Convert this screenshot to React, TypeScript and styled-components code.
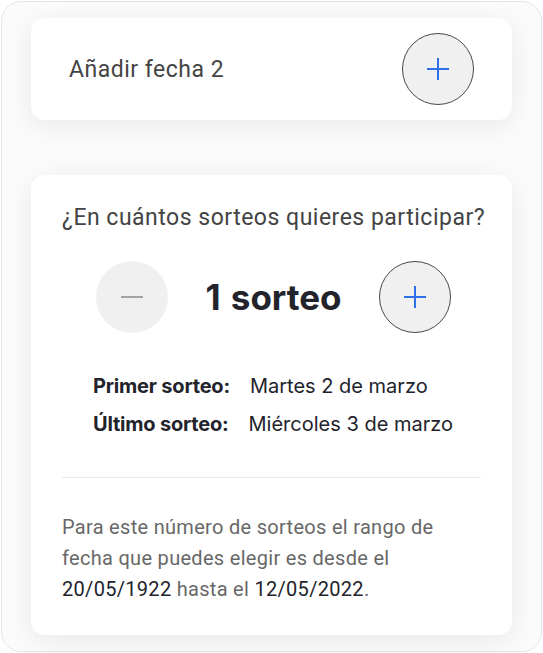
import styled, { createGlobalStyle } from "styled-components";

const GlobalStyle = createGlobalStyle`
  body {
    margin: 0;
    background: #ffffff;
    font-family: Roboto, "Liberation Sans", sans-serif;
  }
`;

const Frame = styled.div`
  box-sizing: border-box;
  margin: 1px;
  width: 541px;
  height: 651px;
  border: 1px solid #e6e6e6;
  border-radius: 20px;
  background: #fbfbfb;
  padding: 16px 29px;
  display: flex;
  flex-direction: column;
  gap: 55px;
`;

const Card = styled.div`
  flex-shrink: 0;
  background: #ffffff;
  border-radius: 14px;
  box-shadow: 0 6px 30px rgba(0, 0, 0, 0.075);
`;

const AddCard = styled(Card)`
  height: 102px;
  box-sizing: border-box;
  padding: 0 38px;
  display: flex;
  align-items: center;
  justify-content: space-between;
`;

const AddLabel = styled.span`
  font-size: 23px;
  letter-spacing: 0.5px;
  color: #444444;
`;

const RoundButton = styled.button<{ $outlined?: boolean }>`
  box-sizing: border-box;
  width: 72px;
  height: 72px;
  border-radius: 50%;
  border: ${(p) => (p.$outlined ? "1.5px solid #484848" : "none")};
  background: #f0f0f0;
  display: flex;
  align-items: center;
  justify-content: center;
  padding: 0;
  cursor: pointer;
`;

const DrawsCard = styled(Card)`
  padding: 30px 31px 30px;
  display: flex;
  flex-direction: column;
`;

const Question = styled.h2`
  margin: 0;
  font-size: 23px;
  letter-spacing: 0.5px;
  font-weight: 400;
  line-height: 26px;
  white-space: nowrap;
  color: #444444;
`;

const Stepper = styled.div`
  margin-top: 30px;
  display: flex;
  align-items: center;
  justify-content: center;
  gap: 37px;
  padding-left: 4px;
`;

const Count = styled.span`
  font-family: Inter, "Liberation Sans", sans-serif;
  font-size: 35px;
  font-weight: 700;
  word-spacing: 2px;
  color: #22232b;
`;

const Dates = styled.div`
  margin-top: 41px;
  padding-left: 31px;
  display: flex;
  flex-direction: column;
  gap: 14px;
`;

const DateRow = styled.div`
  display: flex;
  align-items: center;
  gap: 20px;
  font-family: Inter, "Liberation Sans", sans-serif;
  font-size: 20px;
  line-height: 24px;
  color: #22232b;
`;

const DateLabel = styled.span`
  font-weight: 700;
  letter-spacing: -0.2px;
`;

const Divider = styled.hr`
  margin: 41px 0 0;
  border: none;
  border-top: 1px solid #e9e9e9;
`;

const Note = styled.p`
  margin: 34px 0 0;
  font-size: 20px;
  letter-spacing: 0.3px;
  line-height: 31px;
  color: #686868;
`;

const Strong = styled.span`
  color: #22232b;
`;

const PlusIcon = () => (
  <svg width="24" height="24" viewBox="0 0 24 24">
    <path d="M12 1v22M1 12h22" stroke="#2f6fea" strokeWidth="2" />
  </svg>
);

const MinusIcon = () => (
  <svg width="24" height="24" viewBox="0 0 24 24">
    <path d="M1 12h22" stroke="#8a8a8a" strokeWidth="1.5" />
  </svg>
);

const App = () => {
  return (
    <>
      <GlobalStyle />
      <Frame>
        <AddCard>
          <AddLabel>Añadir fecha 2</AddLabel>
          <RoundButton $outlined aria-label="Añadir fecha">
            <PlusIcon />
          </RoundButton>
        </AddCard>
        <DrawsCard>
          <Question>¿En cuántos sorteos quieres participar?</Question>
          <Stepper>
            <RoundButton aria-label="Menos">
              <MinusIcon />
            </RoundButton>
            <Count>1 sorteo</Count>
            <RoundButton $outlined aria-label="Más">
              <PlusIcon />
            </RoundButton>
          </Stepper>
          <Dates>
            <DateRow>
              <DateLabel>Primer sorteo:</DateLabel>
              <span>Martes 2 de marzo</span>
            </DateRow>
            <DateRow>
              <DateLabel>Último sorteo:</DateLabel>
              <span>Miércoles 3 de marzo</span>
            </DateRow>
          </Dates>
          <Divider />
          <Note>
            Para este número de sorteos el rango de fecha que puedes elegir es
            desde el <Strong>20/05/1922</Strong> hasta el{" "}
            <Strong>12/05/2022</Strong>.
          </Note>
        </DrawsCard>
      </Frame>
    </>
  );
};

export default App;
